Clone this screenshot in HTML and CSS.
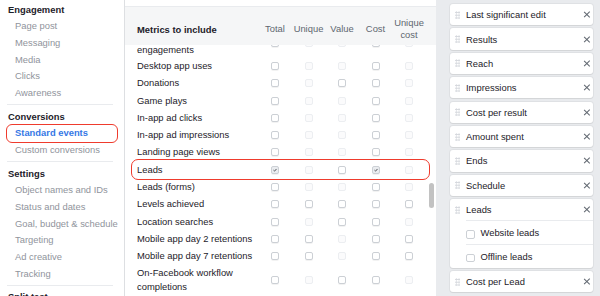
FILE: index.html
```html
<!DOCTYPE html>
<html lang="en">
<head>
    <meta charset="UTF-8">
    <meta name="viewport" content="width=device-width, initial-scale=1.0">
    <title>Customize Columns</title>
    <link rel="stylesheet" href="styles.css">
</head>
<body>

<div class="page">
    <aside class="sidebar">
        <div class="section first">
            <div class="heading">Engagement</div>
            <div class="item">Page post</div>
            <div class="item">Messaging</div>
            <div class="item">Media</div>
            <div class="item">Clicks</div>
            <div class="item">Awareness</div>
        </div>
        <div class="section">
            <div class="heading">Conversions</div>
            <div class="item active">Standard events</div>
            <div class="item">Custom conversions</div>
        </div>
        <div class="section">
            <div class="heading">Settings</div>
            <div class="item">Object names and IDs</div>
            <div class="item">Status and dates</div>
            <div class="item">Goal, budget &amp; schedule</div>
            <div class="item">Targeting</div>
            <div class="item">Ad creative</div>
            <div class="item">Tracking</div>
        </div>
        <div class="section">
            <div class="heading">Split test</div>
        </div>
    </aside>

    <main class="metrics">
        <div class="metrics-top"></div>
        <div class="table-head">
            <div class="title">Metrics to include</div>
            <div class="col">Total</div>
            <div class="col">Unique</div>
            <div class="col">Value</div>
            <div class="col">Cost</div>
            <div class="col">Unique<br>cost</div>
        </div>
        <div class="table-body">
            <div class="rows">
                <!-- list is scrolled: only the tail of this row shows -->
                <div class="row partial"><div class="label">engagements</div>
                    <span class="cb"></span><span class="cb off"></span><span class="cb off"></span><span class="cb"></span><span class="cb off"></span></div>
                <div class="row"><div class="label">Desktop app uses</div>
                    <span class="cb"></span><span class="cb off"></span><span class="cb off"></span><span class="cb"></span><span class="cb off"></span></div>
                <div class="row"><div class="label">Donations</div>
                    <span class="cb"></span><span class="cb off"></span><span class="cb"></span><span class="cb"></span><span class="cb off"></span></div>
                <div class="row"><div class="label">Game plays</div>
                    <span class="cb"></span><span class="cb off"></span><span class="cb off"></span><span class="cb"></span><span class="cb off"></span></div>
                <div class="row"><div class="label">In-app ad clicks</div>
                    <span class="cb"></span><span class="cb off"></span><span class="cb off"></span><span class="cb"></span><span class="cb off"></span></div>
                <div class="row"><div class="label">In-app ad impressions</div>
                    <span class="cb"></span><span class="cb off"></span><span class="cb off"></span><span class="cb"></span><span class="cb off"></span></div>
                <div class="row"><div class="label">Landing page views</div>
                    <span class="cb"></span><span class="cb off"></span><span class="cb off"></span><span class="cb"></span><span class="cb off"></span></div>
                <div class="row highlight"><div class="label">Leads</div>
                    <span class="cb checked"><svg viewBox="0 0 8 8"><path d="M2 4.2 L3.4 5.5 L6 2.6"/></svg></span><span class="cb off"></span><span class="cb"></span><span class="cb checked"><svg viewBox="0 0 8 8"><path d="M2 4.2 L3.4 5.5 L6 2.6"/></svg></span><span class="cb off"></span></div>
                <div class="row"><div class="label">Leads (forms)</div>
                    <span class="cb"></span><span class="cb off"></span><span class="cb off"></span><span class="cb"></span><span class="cb off"></span></div>
                <div class="row"><div class="label">Levels achieved</div>
                    <span class="cb"></span><span class="cb"></span><span class="cb"></span><span class="cb"></span><span class="cb"></span></div>
                <div class="row"><div class="label">Location searches</div>
                    <span class="cb"></span><span class="cb off"></span><span class="cb"></span><span class="cb"></span><span class="cb off"></span></div>
                <div class="row"><div class="label">Mobile app day 2 retentions</div>
                    <span class="cb"></span><span class="cb"></span><span class="cb off"></span><span class="cb"></span><span class="cb"></span></div>
                <div class="row"><div class="label">Mobile app day 7 retentions</div>
                    <span class="cb"></span><span class="cb"></span><span class="cb off"></span><span class="cb"></span><span class="cb"></span></div>
                <div class="row"><div class="label">On-Facebook workflow completions</div>
                    <span class="cb"></span><span class="cb off"></span><span class="cb"></span><span class="cb"></span><span class="cb off"></span></div>
            </div>
            <div class="scrollbar"></div>
        </div>
    </main>

    <aside class="columns">
        <div class="card"><span class="handle"></span><span class="name">Last significant edit</span><span class="close"></span></div>
        <div class="card"><span class="handle"></span><span class="name">Results</span><span class="close"></span></div>
        <div class="card"><span class="handle"></span><span class="name">Reach</span><span class="close"></span></div>
        <div class="card"><span class="handle"></span><span class="name">Impressions</span><span class="close"></span></div>
        <div class="card"><span class="handle"></span><span class="name">Cost per result</span><span class="close"></span></div>
        <div class="card"><span class="handle"></span><span class="name">Amount spent</span><span class="close"></span></div>
        <div class="card"><span class="handle"></span><span class="name">Ends</span><span class="close"></span></div>
        <div class="card"><span class="handle"></span><span class="name">Schedule</span><span class="close"></span></div>
        <div class="card group">
            <div class="card-head"><span class="handle"></span><span class="name">Leads</span><span class="close"></span></div>
            <div class="sub"><span class="sub-cb"></span>Website leads</div>
            <div class="sub"><span class="sub-cb"></span>Offline leads</div>
        </div>
        <div class="card"><span class="handle"></span><span class="name">Cost per Lead</span><span class="close"></span></div>
    </aside>
</div>

</body>
</html>
```

FILE: styles.css
```css
body {
    margin: 0;
    font-family: "Liberation Sans", Arial, sans-serif;
    font-size: 9.4px;
    color: #1d2129;
    background-color: #fff;
}
.page {
    display: flex;
    height: 296px;
    overflow: hidden;
}

/* left nav */
.sidebar {
    width: 124px;
    flex-shrink: 0;
    border-right: 1px solid #dddfe2;
}
.section {
    margin: 0 11px 0 7px;
    padding: 3.3px 0 2.5px;
    border-bottom: 1px solid #e9ebee;
}
.section.first {
    padding-top: 1.65px;
}
.heading {
    line-height: 16.7px;
    padding-left: 1px;
    font-weight: bold;
}
.item {
    line-height: 16.7px;
    padding-left: 8px;
    color: #90949c;
    white-space: nowrap;
}
.item.active {
    position: relative;
    color: #3578e5;
    font-weight: bold;
}
.item.active::after {
    content: "";
    position: absolute;
    left: -1px;
    right: -5px;
    top: -1px;
    bottom: -1px;
    border: 1.5px solid #ef3b2d;
    border-radius: 6px;
}

/* metrics table */
.metrics {
    width: 311px;
    flex-shrink: 0;
    display: flex;
    flex-direction: column;
}
.metrics-top {
    height: 6px;
}
.table-head,
.row {
    display: grid;
    grid-template-columns: 121.25px repeat(5, 33.5px);
    align-items: center;
}
.table-head {
    height: 32px;
    padding: 6px 0 0 12px;
    background-color: #f5f6f7;
    border-top: 1px solid #e9ebee;
}
.title {
    font-weight: bold;
}
.col {
    text-align: center;
    color: #606770;
    line-height: 12px;
}
.table-body {
    position: relative;
    flex: 1;
    overflow: hidden;
}
.row {
    padding: 1.65px 0 1.65px 12px;
    line-height: 14px;
}
.row.partial {
    height: 12.35px;
    padding-top: 0;
    padding-bottom: 0;
    grid-template-rows: 12.35px;
}
.row.partial .label {
    align-self: start;
    margin-top: -2.5px;
}
.row.partial .cb {
    align-self: start;
    margin-top: -6px;
}
.row.highlight {
    position: relative;
}
.row.highlight::after {
    content: "";
    position: absolute;
    left: 6px;
    right: 6px;
    top: -2px;
    bottom: -2px;
    border: 1.5px solid #ef3b2d;
    border-radius: 7px;
}
.label {
    padding-right: 6px;
}
.cb {
    justify-self: center;
    width: 8px;
    height: 8px;
    box-sizing: border-box;
    border: 1px solid #ccd0d5;
    border-radius: 2px;
    background-color: #fff;
    box-shadow: 0 1px 0 rgba(0, 0, 0, 0.05);
}
.cb.off {
    border-color: #eceef1;
    background-color: #fbfbfc;
    box-shadow: none;
}
.cb.checked {
    background-color: #ebedf0;
}
.cb svg {
    display: block;
    width: 6px;
    height: 6px;
    fill: none;
    stroke: #4b4f56;
    stroke-width: 1.3;
}
.scrollbar {
    position: absolute;
    left: 304px;
    top: 138px;
    width: 4.5px;
    height: 25px;
    border-radius: 3px;
    background-color: #c2c2c2;
}

/* chosen columns */
.columns {
    flex: 1;
    background-color: #e9ebee;
    padding: 4px 7px 0 14px;
    display: flex;
    flex-direction: column;
    gap: 3.1px;
}
.card {
    flex-shrink: 0;
    display: flex;
    align-items: center;
    height: 21.3px;
    background-color: #fff;
    border-radius: 3px;
    box-shadow: 0 0 0 1px rgba(0, 0, 0, 0.04), 0 1px 1px rgba(0, 0, 0, 0.06);
}
.card.group {
    display: block;
    height: auto;
}
.card-head {
    display: flex;
    align-items: center;
    height: 21.3px;
}
.handle {
    width: 5px;
    height: 8px;
    margin: 0 6px 0 5px;
    background-image: radial-gradient(circle, #d3d6db 0.9px, transparent 1px);
    background-size: 2.7px 2.8px;
}
.name {
    flex: 1;
    white-space: nowrap;
}
.close {
    position: relative;
    width: 6px;
    height: 6px;
    margin-right: 3px;
}
.close::before,
.close::after {
    content: "";
    position: absolute;
    left: -0.8px;
    top: 2.5px;
    width: 7.6px;
    height: 1px;
    background-color: #606770;
    transform: rotate(45deg);
}
.close::after {
    transform: rotate(-45deg);
}
.sub {
    display: flex;
    align-items: center;
    gap: 6px;
    height: 22.7px;
    margin-left: 16px;
    border-top: 1px solid #e9ebee;
}
.sub-cb {
    width: 8.5px;
    height: 8.5px;
    box-sizing: border-box;
    border: 1px solid #ccd0d5;
    border-radius: 2px;
    margin-top: 3px;
}
```
